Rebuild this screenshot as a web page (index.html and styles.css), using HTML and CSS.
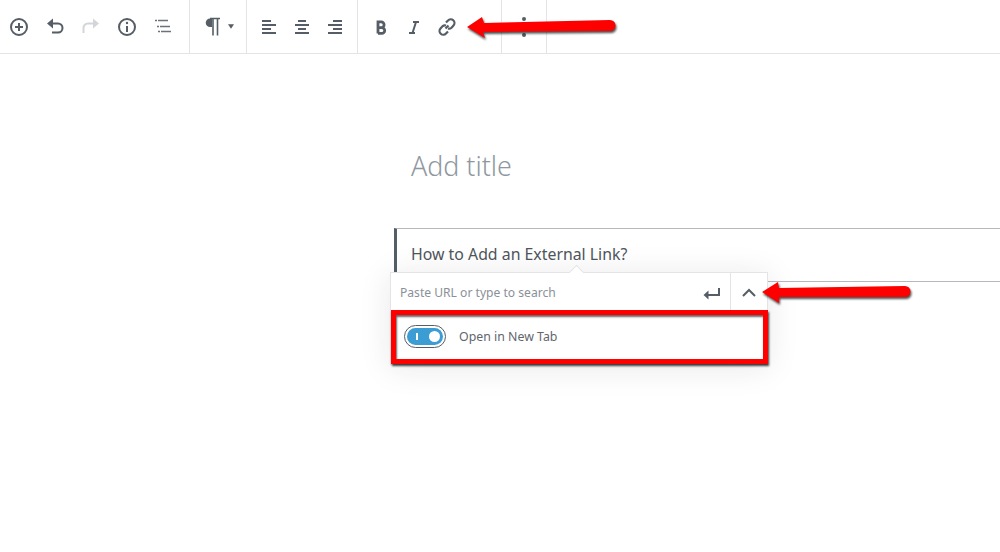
FILE: index.html
```html
<!DOCTYPE html>
<html lang="en">
<head>
<meta charset="utf-8">
<title>Add title</title>
<link rel="stylesheet" href="styles.css">
</head>
<body>
<div class="toolbar">
  <div class="group g1">
    <svg class="ic" viewBox="0 0 20 20"><circle cx="10" cy="10" r="8" class="s"/><path d="M10 6v8M6 10h8" class="s"/></svg>
    <svg class="ic" viewBox="0 0 20 20"><path d="M6 6.500h7a4.500 4.500 0 0 1 0 9H7" class="s"/><path d="M8 1.500L2 6.500 8 11.500z" class="f"/></svg>
    <svg class="ic dim" viewBox="0 0 20 20"><path d="M14 6.500H7a4.500 4.500 0 0 0-4.500 4.500v5" class="s"/><path d="M12 1.500l6 5-6 5z" class="f"/></svg>
    <svg class="ic" viewBox="0 0 20 20"><circle cx="10" cy="10" r="8" class="s"/><path d="M10 9v6" class="s"/><circle cx="10" cy="6" r="1.200" class="f"/></svg>
    <svg class="ic" viewBox="0 0 20 20"><path d="M2 3.500h13M4 9.500h13M5 14.500h13" class="t"/></svg>
  </div>
  <div class="group g2">
    <svg class="pil" viewBox="0 0 16 20"><path d="M8 1.500H6a4.200 4.200 0 0 0 0 8.500h2z" class="f"/><path d="M6 1.500h10M9 1.500v17M13.500 1.500v17" class="p"/></svg>
    <svg class="caret" viewBox="0 0 7 5"><path d="M0 0h7L3.500 5z" class="f"/></svg>
  </div>
  <div class="group g3">
    <svg class="ic" viewBox="0 0 20 20"><path d="M3 4h9M3 8h14M3 12h9M3 16h14" class="s"/></svg>
    <svg class="ic" viewBox="0 0 20 20"><path d="M6 4h8M3 8h14M6 12h8M3 16h14" class="s"/></svg>
    <svg class="ic" viewBox="0 0 20 20"><path d="M8 4h9M3 8h14M8 12h9M3 16h14" class="s"/></svg>
  </div>
  <div class="group g4">
    <svg class="ic" viewBox="0 0 20 20"><path d="M7 3.500v13M7 4.800h3.200a2.900 2.900 0 0 1 0 5.800H7M7 10.600h3.800a2.900 2.900 0 0 1 0 5.800H7" class="b"/></svg>
    <svg class="ic" viewBox="0 0 20 20"><path d="M9 5h6M5 16h6M12 5l-3.500 11" class="s"/></svg>
    <svg class="ic" viewBox="0 0 20 20"><path d="M8.500 11.500l3-3M9 5.500l2-2a3.500 3.500 0 0 1 5.500 5l-2 2.200a3.500 3.500 0 0 1-3.500.8M11 14.500l-2 2a3.500 3.500 0 0 1-5.500-5l2-2.200a3.500 3.500 0 0 1 3.500-.8" class="l"/></svg>
  </div>
  <div class="group g5">
    <svg class="dots" viewBox="0 0 6 24"><circle cx="3" cy="4" r="2" class="f"/><circle cx="3" cy="12" r="2" class="f"/><circle cx="3" cy="20" r="2" class="f"/></svg>
  </div>
</div>

<main class="editor">
  <h1 class="title">Add title</h1>
  <div class="block">
    <p class="para">How to Add an External Link?</p>
  </div>
</main>

<div class="popover">
  <span class="notch"></span>
  <div class="urlrow">
    <span class="placeholder">Paste URL or type to search</span>
    <span class="enter">
      <svg class="enter-ic" viewBox="0 0 20 16"><path d="M17 4v7H5" class="s"/><path d="M6.500 6.500v9L1.500 11z" class="f"/></svg>
    </span>
    <span class="expand">
      <svg class="chev" viewBox="0 0 14 9"><path d="M1 8l6-6 6 6" class="s"/></svg>
    </span>
  </div>
  <div class="tabrow">
    <span class="toggle"><span class="track"><span class="tick"></span><span class="knob"></span></span></span>
    <span class="tablabel">Open in New Tab</span>
  </div>
</div>

<svg class="arrow a1" viewBox="0 0 152 30"><path d="M1 15L16 5l2 6 126-3a5.500 5.500 0 0 1 0 11L17 20l2 6z" class="ar"/></svg>
<svg class="arrow a2" viewBox="0 0 152 28"><path d="M2 14L18 4l1 6 126-2a5.500 5.500 0 0 1 0 11L19 19l0 6z" class="ar"/></svg>
</body>
</html>
```

FILE: styles.css
```css
* { box-sizing: border-box; }
html, body { margin: 0; padding: 0; }
body {
  position: relative;
  width: 1000px;
  height: 552px;
  overflow: hidden;
  background: #fff;
  font-family: "Noto Sans", "Open Sans", sans-serif;
  color: #555d66;
}
svg { display: block; flex: none; }
.s { fill: none; stroke: #555d66; stroke-width: 2; }
.l { fill: none; stroke: #555d66; stroke-width: 2.200; }
.t { fill: none; stroke: #6b727a; stroke-width: 1.500; stroke-dasharray: 2 1 20; }
.f { fill: #555d66; }
.b { fill: none; stroke: #555d66; stroke-width: 2.800; }
.p { fill: none; stroke: #555d66; stroke-width: 1.600; }
.dim { opacity: .25; }

.toolbar {
  display: flex;
  height: 54px;
  border-bottom: 1px solid #e2e4e7;
}
.group {
  display: flex;
  align-items: center;
  height: 53px;
  border-right: 1px solid #e2e4e7;
}
.ic { width: 20px; height: 20px; }
.g1 { width: 190px; padding-left: 9px; gap: 16px; }
.g2 { width: 57px; padding-left: 14px; gap: 8px; }
.pil { width: 16px; height: 20px; }
.caret { width: 6px; height: 5px; }
.g3 { width: 111px; padding-left: 12px; gap: 13px; }
.g4 { width: 144px; padding-left: 13px; gap: 13px; }
.g5 { width: 45px; justify-content: center; }
.dots { width: 6px; height: 24px; }

.editor { padding: 95px 0 0 394px; }
.title {
  margin: 0 0 45px 17px;
  font-size: 26.800px;
  font-weight: 300;
  line-height: 34px;
  color: #8f98a1;
}
.block {
  height: 54px;
  border-top: 1px solid #b5b9be;
  border-bottom: 1px solid #b5b9be;
  border-left: 3px solid #555d66;
  padding: 13px 0 0 14px;
}
.para { margin: 0; font-size: 15.850px; line-height: 24px; color: #4f555c; }

.popover {
  position: absolute;
  left: 390px;
  top: 272px;
  width: 378px;
  height: 93px;
  background: #fff;
  border: 1px solid #e2e4e7;
  box-shadow: 0 3px 30px rgba(25, 30, 35, .1);
}
.notch {
  position: absolute;
  left: 180px;
  top: -6px;
  width: 11px;
  height: 11px;
  background: #fff;
  border-top: 1px solid #e2e4e7;
  border-left: 1px solid #e2e4e7;
  transform: rotate(45deg);
}
.urlrow {
  position: relative;
  display: flex;
  align-items: center;
  height: 38px;
}
.placeholder { flex: 1; padding-left: 9px; font-size: 12.100px; color: #8a9098; }
.enter { width: 28px; display: flex; justify-content: flex-start; }
.enter-ic { width: 20px; height: 16px; }
.expand {
  width: 37px;
  height: 38px;
  display: flex;
  align-items: center;
  justify-content: center;
  border-left: 1px solid #e2e4e7;
}
.chev { width: 14px; height: 9px; }
.tabrow {
  position: absolute;
  left: 0;
  top: 37px;
  width: 377px;
  height: 54px;
  display: flex;
  align-items: center;
  gap: 13px;
  padding: 0 0 1px 8px;
  border: 5px solid #f00;
  box-shadow: 1px 2px 2px rgba(0, 0, 0, .75), inset 1px 2px 2px rgba(0, 0, 0, .6);
}
.toggle {
  width: 42px;
  height: 23px;
  padding: 2px;
  border: 1px solid #555d66;
  border-radius: 12px;
}
.track {
  position: relative;
  display: block;
  height: 17px;
  border-radius: 9px;
  background: #3c9dd5;
}
.tick {
  position: absolute;
  left: 9px;
  top: 5px;
  width: 2px;
  height: 7px;
  background: #fff;
}
.knob {
  position: absolute;
  right: 3px;
  top: 3px;
  width: 11px;
  height: 11px;
  border-radius: 50%;
  background: #fff;
}
.tablabel { font-size: 12.350px; color: #5f666e; }

.arrow { position: absolute; overflow: visible; filter: drop-shadow(1px 2px 1px rgba(0, 0, 0, .7)); }
.ar { fill: #f00; }
.a1 { left: 466px; top: 12px; width: 152px; height: 30px; }
.a2 { left: 760px; top: 278px; width: 152px; height: 28px; }
```
